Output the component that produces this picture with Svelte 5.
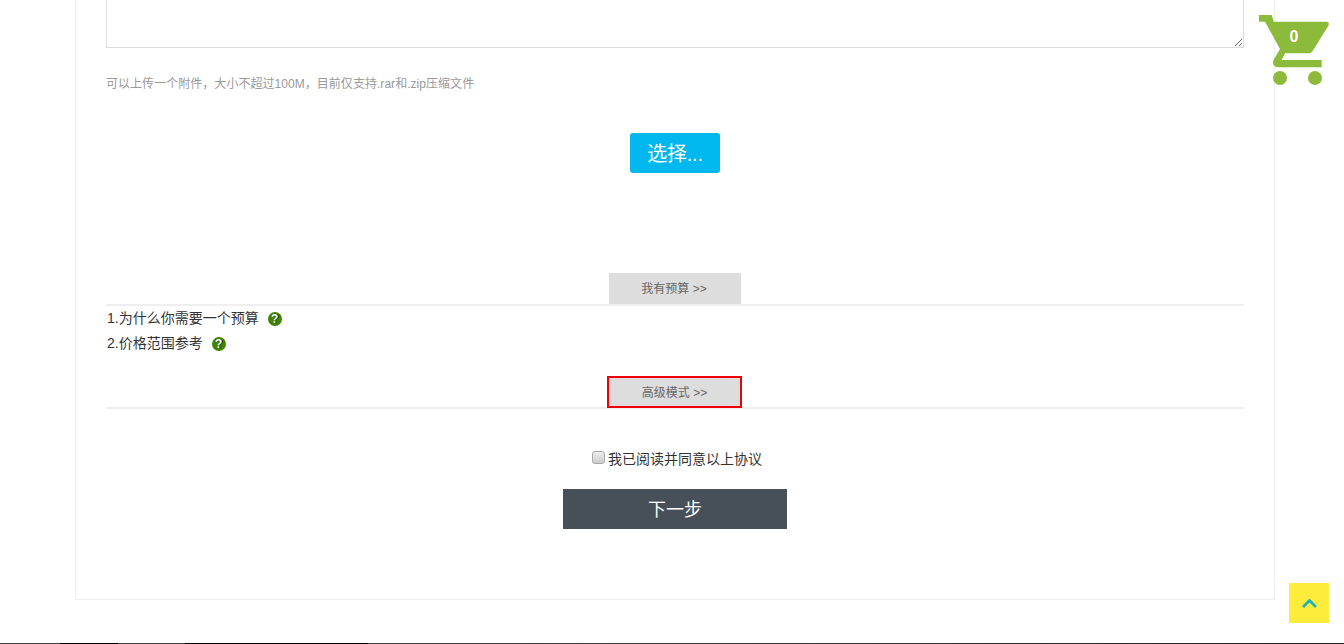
<script lang="ts">
	let agreed = $state(false);
</script>

<div class="page">
	<main class="panel">
		<textarea class="note" aria-label="note"></textarea>
		<p class="hint">可以上传一个附件，大小不超过100M，目前仅支持.rar和.zip压缩文件</p>

		<div class="pick-row">
			<button class="pick">选择...</button>
		</div>

		<div class="divider first">
			<span class="tab">我有预算 &gt;&gt;</span>
		</div>
		<ul class="faq">
			<li>1.为什么你需要一个预算 <span class="help">?</span></li>
			<li>2.价格范围参考 <span class="help">?</span></li>
		</ul>

		<div class="divider second">
			<span class="tab outlined">高级模式 &gt;&gt;</span>
		</div>

		<label class="agree">
			<input type="checkbox" bind:checked={agreed} />
			<span>我已阅读并同意以上协议</span>
		</label>

		<div class="next-row">
			<button class="next">下一步</button>
		</div>
	</main>

	<footer class="foot"></footer>

	<!-- floating cart -->
	<div class="cart">
		<svg width="72" height="72" viewBox="0 0 72 72" fill="#8cbb3c">
			<path d="M1 1 H13.700 L15.700 7.700 H68 Q72 7.700 70.500 11.500 L55 36.500 Q53.500 39.300 50.500 39.300 H27 L23.700 46 H63.700 V53.300 H21 Q13.500 53.300 15.500 46 L22 35 L7 7.700 H1 Z" />
			<circle cx="22" cy="64" r="7" />
			<circle cx="57" cy="64" r="7" />
		</svg>
		<span class="count">0</span>
	</div>

	<!-- back to top -->
	<button class="top" aria-label="top">
		<svg width="15" height="10" viewBox="0 0 15 10" fill="none" stroke="#1bb4b4" stroke-width="2.800">
			<polyline points="1,9 7.500,2.500 14,9" />
		</svg>
	</button>
</div>

<style>
	:global(body) {
		background: #fff;
	}

	.page {
		position: relative;
		height: 644px;
		overflow: hidden;
		font-family: 'Liberation Sans', 'Noto Sans CJK SC', sans-serif;
		color: #333;
	}

	.panel {
		box-sizing: border-box;
		width: 1200px;
		height: 601px;
		margin: -1px 0 0 75px;
		padding: 0 30px;
		border: 1px solid #eee;
		border-top: 0;
	}

	.note {
		display: block;
		box-sizing: border-box;
		width: 100%;
		height: 49px;
		padding: 0;
		border: 1px solid #ddd;
		border-top: 0;
		background: #fff;
		outline: none;
	}

	.hint {
		margin: 28px 0 0;
		font-size: 12px;
		line-height: 16px;
		letter-spacing: 0.04px;
		color: #999;
	}

	.pick-row {
		display: flex;
		justify-content: center;
		margin-top: 41px;
	}

	.pick {
		width: 90px;
		height: 40px;
		padding: 0 0 2px;
		border: 0;
		border-radius: 3px;
		background: #00b7ee;
		color: #fff;
		font: inherit;
		font-size: 20px;
		letter-spacing: -0.2px;
	}

	.divider {
		display: flex;
		justify-content: center;
		border-bottom: 2px solid #eee;
	}

	.divider.first {
		margin-top: 100px;
	}

	.divider.second {
		margin-top: 20px;
	}

	.tab {
		box-sizing: border-box;
		width: 132px;
		height: 31px;
		padding-right: 2px;
		background: #ddd;
		color: #666;
		font-size: 12px;
		line-height: 33px;
		text-align: center;
	}

	/* red box sits one pixel over the rule */
	.tab.outlined {
		width: 135px;
		height: 32px;
		margin: 0 1px -1px 0;
		padding-right: 0;
		line-height: 30px;
		border: 2px solid #e00;
	}

	.faq {
		margin: 0;
		padding: 0;
		list-style: none;
		font-size: 14px;
		line-height: 25px;
	}

	.faq li {
		padding-left: 1px;
		display: flex;
		align-items: center;
		gap: 10px;
	}

	.help {
		width: 14px;
		height: 14px;
		margin-left: -1px;
		border-radius: 50%;
		background: #3f8400;
		color: #fff;
		font-size: 12px;
		font-weight: 700;
		line-height: 14px;
		text-align: center;
		text-shadow: 1px 0 0 #111;
	}

	.agree {
		display: flex;
		justify-content: center;
		align-items: center;
		gap: 3px;
		margin-top: 40px;
		padding-left: 4px;
		font-size: 14px;
		line-height: 20px;
	}

	.agree input {
		appearance: none;
		box-sizing: border-box;
		width: 13px;
		height: 13px;
		margin: -3px 0 0;
		border: 1px solid #aaa;
		border-radius: 3px;
		background: linear-gradient(#eee, #ccc);
	}

	.next-row {
		display: flex;
		justify-content: center;
		margin-top: 20px;
	}

	.next {
		width: 224px;
		height: 40px;
		padding: 0 0 2px;
		border: 0;
		background: #475058;
		color: #fff;
		font: inherit;
		font-size: 18px;
	}

	.foot {
		position: absolute;
		left: 0;
		right: 0;
		bottom: 0;
		height: 1px;
		background: linear-gradient(
			to right,
			#444 0 60px,
			#000 60px 118px,
			#444 118px 185px,
			#000 185px 368px,
			#444 368px,
			#222
		);
	}

	.cart {
		position: absolute;
		left: 1258px;
		top: 14px;
		width: 72px;
		height: 72px;
	}

	.count {
		position: absolute;
		left: 22px;
		top: 13px;
		width: 28px;
		color: #fff;
		font-size: 16px;
		font-weight: 700;
		line-height: 20px;
		text-align: center;
	}

	.top {
		position: absolute;
		left: 1289px;
		top: 583px;
		display: flex;
		align-items: center;
		justify-content: center;
		width: 40px;
		height: 40px;
		padding: 0;
		border: 0;
		background: #ffeb3b;
	}
</style>
